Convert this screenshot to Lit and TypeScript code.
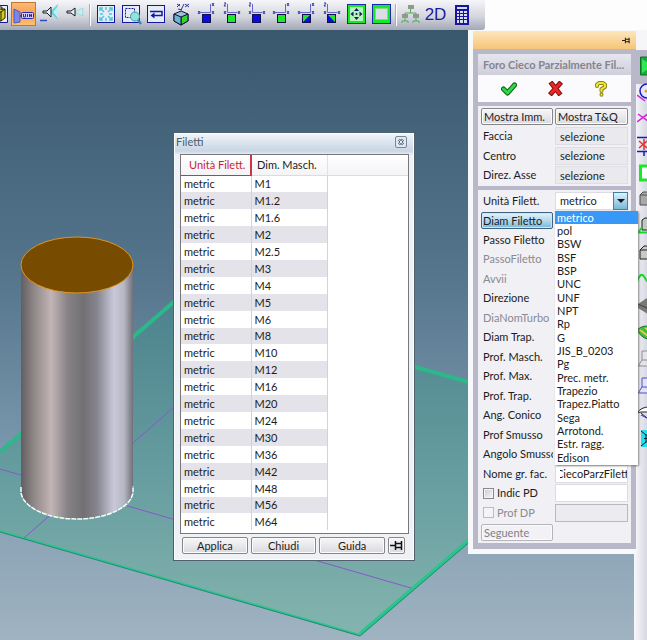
import { LitElement, html, css, svg, nothing } from "lit";
import { customElement, state } from "lit/decorators.js";
import { classMap } from "lit/directives/class-map.js";

const NAVY = "#1616a0";

/* ---------- toolbar icons, drawn on a 25 x 30 field ---------- */

const cube = (x: number, y: number) => svg`
  <path d="M${x} ${y + 3}l7-3 7 3v7l-7 4-7-4z" fill="#9cc0d8" stroke="#101030"/>
  <path d="M${x + 7} ${y + 6}l7-3v7l-7 4z" fill="#2fd42f" stroke="#101030"/>
  <path d="M${x} ${y + 3}l7 3v8l-7-4z" fill="#6cb4d0" stroke="#101030"/>`;

/* axis triad over a small coloured square; flip mirrors the long axis */
const view = (fill: string, flip: boolean, corner?: string) => svg`
  <path d=${flip ? "M16.500 4v8.500M6 12.500h10.500" : "M8.500 4v8.500M8.500 12.500h10"} fill="none" stroke="#6868c8"/>
  <path d=${flip ? "M18 3l2 3m0-3l-2 3M4 11l2 3m0-3l-2 3M18 11l2 3m0-3l-2 3" : "M5 3h2l-2 3h2M5 11l2 3m0-3l-2 3M19 11l2 3m0-3l-2 3"} stroke="#3838b0" fill="none"/>
  <rect x="8.500" y="14.500" width="8" height="8" fill=${fill} stroke="#101050"/>
  ${corner ? svg`<path d=${flip ? "M16 15v7H9z" : "M9 15v7h7z"} fill=${corner}/>` : nothing}`;

const frame = svg`<rect x="3.500" y="5.500" width="17" height="17" fill="#e4ecf8" stroke="${NAVY}"/>`;

const tools: { name: string; art: unknown; cls?: string }[] = [
  { name: "Solido", cls: "cut", art: svg`<path d="M8 5.500h15.500v17H8" fill="#eef" stroke="${NAVY}"/>
      <path d="M10 12l4-3h7v9l-4 3h-7z" fill="#d8cc20" stroke="#202000"/><path d="M10 12h7v9M17 12l4-3M12 7h6v3" fill="none" stroke="#202000"/>` },
  { name: "Quota", cls: "active", art: svg`<path d="M3 9l6 3v10l-6 1z" fill="#7c86e8" stroke="#5058c8"/>
      <path d="M9 16h2" stroke="${NAVY}"/><rect x="10.500" y="12.500" width="12" height="6" rx="1" fill="#d4ccf4" stroke="#2828b0"/>
      <path d="M12.500 14v3h2v-3M16.500 14v3M18.500 17v-3l2 3v-3" fill="none" stroke="#2828b0"/>` },
  { name: "Luce ampia", art: svg`<path d="M14 12l8-8q-2 8 0 16z" fill="#5fd4dc"/><path d="M17 12l5-6v12z" fill="#b8f0f4"/>
      <path d="M7 11h4l4-4v10l-4-4H7z" fill="#e8f4f4" stroke="#101820"/><path d="M4 20.500h7" stroke="#2850c0" stroke-width="1.500"/>` },
  { name: "Luce stretta", art: svg`<path d="M14 12l8-4q-1 4 0 8z" fill="#c4f0f0" stroke="#78c8cc" stroke-width=".5"/>
      <path d="M6 11h4l4-3v8l-4-3H6z" fill="#e8f4f4" stroke="#101820"/>` },
  { name: "", cls: "sep", art: nothing },
  { name: "Zoom tutto", art: svg`${frame}<g stroke="#50c8d8" stroke-width="1.500" fill="none"><path d="M10 12L6 8m0 3V8h3M14 12l4-4m-3 0h3v3M10 16l-4 4m0-3v3h3M14 16l4 4m0-3v3h-3M12 10V7M12 18v3M9 14H6M15 14h3"/></g>` },
  { name: "Zoom finestra", art: svg`${frame}<path d="M6.500 8.500h9v9h-9z" fill="none" stroke="${NAVY}" stroke-dasharray="2 1"/>
      <path d="M19 20l3 4" stroke="#3088b8" stroke-width="2.500"/><circle cx="16" cy="16.500" r="4.500" fill="#8fe4dc" stroke="#4898b0"/>` },
  { name: "Vista precedente", art: svg`${frame}<path d="M6 11.500H18V15.500H9" fill="none" stroke="${NAVY}" stroke-width="1.500"/><path d="M6.500 15.500l4-3v6z" fill="${NAVY}"/>` },
  { name: "Assonometria", art: svg`${cube(5, 11)}<path d="M8 4l3 2m0-2L8 7m7-3l-3 6M16 4l4 3m0-3l-4 3M9 9l4 1" stroke="#3030a8" fill="none"/>` },
  { name: "Vista frontale", art: view("#0c0ce0", true) },
  { name: "Vista dietro", art: view("#20e828", false) },
  { name: "Vista destra", art: view("#0c0ce0", false) },
  { name: "Vista sinistra", art: view("#20e828", true) },
  { name: "Vista alto", art: view("#20e828", true, "#0c0ce0") },
  { name: "Vista basso", art: view("#20e828", false, "#0c0ce0") },
  { name: "Centra", art: svg`<rect x="3.500" y="4.500" width="18" height="19" fill="#18e828" stroke="#1828b0"/><rect x="6" y="7" width="13" height="14" fill="#b8f4c0"/>
      <path d="M12.500 8l2.500 3h-5zM12.500 20l2.500-3h-5zM6.500 14l3-2.500v5zM18.500 14l-3-2.500v5z" fill="#102050"/><circle cx="12.500" cy="14" r="1" fill="#102050"/>` },
  { name: "Riquadro", art: svg`<rect x="3.500" y="4.500" width="18" height="19" fill="#18e828" stroke="#1828b0"/><rect x="6.500" y="8.500" width="12" height="11" fill="#dcdce8" stroke="#80d890"/>` },
  { name: "", cls: "sep short", art: nothing },
  { name: "Struttura", art: svg`<path d="M12.500 9v4M7 16v-3h11v3M7 18v3M4 23v-2h6v2M18 18v3M15 23v-2h6v2" fill="none" stroke="#50b050"/>
      <path d="M10 5h6v4h-6zM4 14h6v4H4zM15 14h6v4h-6z" fill="#909890"/>` },
  { name: "2D", cls: "word", art: nothing },
  { name: "Calcolatrice", art: svg`<rect x="7" y="5" width="14" height="20" fill="${NAVY}"/><rect x="9" y="7" width="10" height="2" fill="#d8dcf4"/>
      <path d="M9 11h2v2H9zM12 11h3v2h-3zM16 11h3v2h-3zM9 14h2v2H9zM12 14h3v2h-3zM16 14h3v2h-3zM9 17h2v2H9zM12 17h3v2h-3zM16 17h3v2h-3zM9 20h2v3H9zM12 20h3v3h-3zM16 20h3v3h-3z" fill="#d8dcf4"/>` },
];

/* ---------- side rail icons, 20 x 20, cut off by the window edge ---------- */
const rail: { name: string; art: unknown }[] = [
  { name: "Avvia", art: svg`<path d="M3.500 1h16v18h-16z" fill="#18a838" stroke="#107028"/><path d="M5 3l12 7-12 7z" fill="#30e850"/>` },
  { name: "Cerchio", art: svg`<circle cx="10" cy="8" r="7" fill="#e8e8ff" stroke="#1818d0" stroke-width="1.500"/><circle cx="9" cy="8" r="1.500" fill="#e0a020"/><path d="M0 12l8 6" stroke="#d020d0" stroke-width="1.500"/>` },
  { name: "Linee", art: svg`<path d="M0 13L12 4M1 5l10 7" stroke="#d820d8" stroke-width="1.500" fill="none"/>` },
  { name: "Punto", art: svg`<path d="M0 1.500h20M0 15.500h20M7 16v8" stroke="#1818c0" stroke-width="1.500"/><path d="M2 5l8 7M2 12l8-7M7 3v11" stroke="#e83030" stroke-width="1.500"/>` },
  { name: "Rettangolo", art: svg`<rect x="3.500" y="3" width="16" height="14" fill="#fff" stroke="#18e828" stroke-width="3"/>` },
  { name: "Blocco", art: svg`<path d="M3 6l3-3h14v13H3z" fill="#a8a8a8" stroke="#505050"/><path d="M3 6h16" stroke="#505050"/>` },
  { name: "Estrusione", art: svg`<path d="M5 4l3-2h12v12H5z" fill="#c0c8c0" stroke="#202020"/><path d="M1 16.500l4-5M1 16.500h19" stroke="#18d828" stroke-width="2"/>` },
  { name: "Scatola", art: svg`<path d="M3 7l4-4h13v13H3z" fill="#c8c8c8" stroke="#202020"/><path d="M3 7h16" stroke="#202020"/>` },
  { name: "Curva", art: svg`<path d="M0 13q4-12 8-4t8 0" fill="none" stroke="#18d828" stroke-width="2"/>` },
  { name: "Piastra", art: svg`<path d="M1 8l9-6 9 4v9l-8 3-10-6z" fill="#787878"/><path d="M1 8l9 4 9-5" stroke="#404040" fill="none"/>` },
  { name: "Superficie", art: svg`<path d="M0 7q6-6 16-3v12q-10 2-16-9z" fill="#38c048" stroke="#207028"/><path d="M3 7l8 6M8 5l7 4" stroke="#e0d040" stroke-width="2"/>` },
  { name: "Lamiera", art: svg`<path d="M5 2h12v9H5zM5 11l-4 6h14" fill="#e4e4e8" stroke="#909090"/>` },
  { name: "Piega", art: svg`<path d="M5 2h12v9H5zM5 11l-4 6h14" fill="#e0e0f8" stroke="#5050c0"/>` },
  { name: "Volume", art: svg`<path d="M0 10q4-6 12-6h8v5H4zM4 10l6 5" fill="#fff" stroke="#202030"/><path d="M4 12l8 4" stroke="#3030b0"/>` },
  { name: "Griglia", art: svg`<path d="M4 1h16v17H4z" fill="#20e0e8"/><path d="M4 2l5 4v7l-5 4M9 6h11M9 13h11M7 9.500h13M12 6v7" fill="none" stroke="#102030"/>` },
];

const pin = svg`<path d="M0 5.500h5M5.500 1v9M6 3.500h6M6 7.500h6M11.500 1v9" fill="none" stroke="#111" stroke-width="1.500"/>`;

type Row = { label: string; id: string; off?: boolean; button?: boolean };
const params: Row[] = [
  { label: "Diam Filetto", id: "diam", button: true },
  { label: "Passo Filetto", id: "passo" },
  { label: "PassoFiletto", id: "passo2", off: true },
  { label: "Avvii", id: "avvii", off: true },
  { label: "Direzione", id: "dir" },
  { label: "DiaNomTurbo", id: "turbo", off: true },
  { label: "Diam Trap.", id: "dtrap" },
  { label: "Prof. Masch.", id: "pmasch" },
  { label: "Prof. Max.", id: "pmax" },
  { label: "Prof. Trap.", id: "ptrap" },
  { label: "Ang. Conico", id: "conico" },
  { label: "Prof Smusso", id: "smusso" },
  { label: "Angolo Smusso", id: "asmusso" },
];
const units = ["metrico", "pol", "BSW", "BSF", "BSP", "UNC", "UNF", "NPT", "Rp", "G", "JIS_B_0203", "Pg",
  "Prec. metr.", "Trapezio", "Trapez.Piatto", "Sega", "Arrotond.", "Estr. ragg.", "Edison"];
const threads = ["M1", "M1.2", "M1.6", "M2", "M2.5", "M3", "M4", "M5", "M6", "M8", "M10", "M12", "M16", "M20",
  "M24", "M30", "M36", "M42", "M48", "M56", "M64"];

const base = css`
  * { box-sizing: border-box; }
  button, input, select { font: inherit; color: inherit; margin: 0; padding: 0; border-radius: 0; }
  button { border: 0; background: none; }
  svg { display: block; }
  .btn {
    border: 1px solid #85858a; border-radius: 2px;
    background: linear-gradient(#f6f6f8, #e9e9ec 50%, #d9d9de);
    box-shadow: inset 0 0 0 1px #fbfbfc;
  }
`;

@customElement("thread-dialog")
export class ThreadDialog extends LitElement {
  static styles = [base, css`
    :host {
      display: block; border: 1px solid #50606c; padding: 0 5px 6px 6px;
      background: linear-gradient(#f0f5fa, #c9d6e4 18px, #f0f1f5 22px);
      box-shadow: inset 0 0 0 1px #fafcfe;
    }
    header { display: flex; align-items: center; justify-content: space-between; height: 18px; color: #4c5d6c; }
    h2 { margin: 0 0 0 -4px; font-size: 11px; line-height: 16px; font-weight: 400; }
    .close { width: 12px; height: 12px; margin-right: 2px; border: 1px solid #748898; border-radius: 2px; background: #dfe8f0; }
    .list { margin-top: 3px; height: 380px; border: 1px solid #77777c; background: #fff; }
    .head { background: linear-gradient(#fff, #f4f4f6); }
    table { border-collapse: collapse; table-layout: fixed; width: 100%; line-height: 14px; }
    .unit { width: 70px; }
    .dim { width: 76px; }
    th { height: 20px; padding: 0 0 0 5px; font-weight: 400; text-align: left; border-right: 1px solid #e2e2e6; border-bottom: 1px solid #dcdce0; }
    th:first-child { padding-left: 8px; color: #cc1c34; border-right: 2px solid #cc3448; border-bottom-color: #cc3448; }
    th:last-child { border-right: 0; }
    td { height: 17px; padding: 0 3px; border-right: 1px solid #d2d2d8; }
    td:last-child { border: 0; }
    tr:nth-child(10n) td { height: 16px; }
    tr:nth-child(even) td:not(:last-child) { background: #e4e3e9; }
    .actions { display: flex; gap: 3px; margin: 3px 4px 0 2px; height: 17px; }
    .actions .btn { flex: 1; line-height: 14px; }
    .actions .pin { flex: 0 0 17px; display: grid; place-items: center; }
  `];
  render() {
    return html`
      <header><h2>Filetti</h2>
        <button class="close" aria-label="Chiudi finestra"><svg width="10" height="10" viewBox="0 0 10 10"><path d="M3 2.500l4 5M7 2.500l-4 5" stroke="#405464" stroke-width="2.500"/><path d="M3 2.500l4 5M7 2.500l-4 5" stroke="#fff"/></svg></button>
      </header>
      <div class="list"><table>
        <colgroup><col class="unit"><col class="dim"><col></colgroup>
        <thead class="head"><tr><th>Unità Filett.</th><th>Dim. Masch.</th><th></th></tr></thead>
        <tbody>${threads.map((t) => html`<tr><td>metric</td><td>${t}</td><td></td></tr>`)}</tbody>
      </table></div>
      <div class="actions">
        <button class="btn">Applica</button><button class="btn">Chiudi</button><button class="btn">Guida</button>
        <button class="btn pin" aria-label="Fissa"><svg width="13" height="11" viewBox="0 0 13 11">${pin}</svg></button>
      </div>`;
  }
}

@customElement("hole-panel")
export class HolePanel extends LitElement {
  @state() private unit = "metrico";
  static styles = [base, css`
    :host { display: block; background: #f7f8fa; padding: 1px 0 5px 5px; }
    .grip { display: flex; align-items: center; justify-content: flex-end; height: 18px; padding-right: 6px; background: linear-gradient(#fde6bd, #f6c577); }
    .inner { display: flex; flex-direction: column; gap: 4px; padding: 5px 5px 6px; background: #b9b8cb; }
    section { background: #f0f0f5; padding: 1px 3px; }
    .title { padding: 0; background: #fbfbfd; }
    h1 { margin: 0; padding: 0 5px; height: 21px; font-size: 11px; line-height: 21px; color: #85858f; background: linear-gradient(#e6e6ef, #cfcfdb); white-space: nowrap; }
    .confirm { display: flex; justify-content: space-around; align-items: center; height: 27px; padding: 0 8px; }
    .row { display: grid; grid-template-columns: 72px 1fr; column-gap: 2px; align-items: center; height: 19px; line-height: 16px; }
    .row:nth-of-type(even) { height: 20px; }
    .row > label { padding-left: 2px; overflow: hidden; white-space: nowrap; }
    .off { color: #8a8a90; }
    .btn { height: 17px; line-height: 15px; padding: 0 2px; text-align: left; white-space: nowrap; }
    .hot { border-color: #3c6480; background: linear-gradient(#e4f2fa, #b4daee 50%, #78b8d8); box-shadow: inset 0 0 0 1px #c8e8f8; padding: 0 1px; }
    .ghost { border-color: #b4b4ba; background: #f2f2f6; color: #808086; }
    .field { width: 100%; min-width: 0; height: 18px; padding: 0 4px; border: 1px solid #dcdce2; background: #fff; }
    .pick { background: #e9e9ee; border-color: #dedee4; }
    .field:disabled { background: #ececf0; border-color: #b8b8be; }
    .name { text-indent: -4px; padding-right: 0; }
    .combo { position: relative; }
    select { display: block; appearance: none; width: 100%; height: 18px; padding: 0 18px 0 4px; border: 1px solid #dcdce2; background: #fff; outline: none; }
    .arrow { position: absolute; right: 0; top: 0; width: 15px; height: 18px; display: grid; place-items: center; border: 1px solid #4080a0; background: linear-gradient(#e0f2fa, #a8d4ea 50%, #78b8d8); pointer-events: none; }
    ul { position: absolute; z-index: 2; top: 100%; left: 0; right: -10px; margin: 1px 0 0; padding: 0 0 1px; list-style: none; background: #fff; box-shadow: 1px 1px 2px #555a; }
    li { height: 13px; line-height: 13px; padding-left: 2px; white-space: nowrap; }
    li:nth-child(3n) { height: 14px; }
    li.sel { background: #3898f8; color: #fff; }
    .check { display: flex; align-items: center; gap: 3px; }
    input[type="checkbox"] { appearance: none; flex: none; width: 11px; height: 11px; border: 1px solid #88888e; background: linear-gradient(135deg, #c8ccd0, #f6f6f8); box-shadow: inset 0 0 0 1px #f4f4f6; }
    input[type="checkbox"]:disabled { border-color: #bcbcc2; background: #f4f4f7; }
  `];
  render() {
    return html`
      <div class="grip"><button aria-label="Fissa pannello"><svg width="8" height="7" viewBox="0 0 13 11">${pin}</svg></button></div>
      <div class="inner">
        <section class="title">
          <h1>Foro Cieco Parzialmente Fil...</h1>
          <div class="confirm">
            <button aria-label="Conferma"><svg width="16" height="15" viewBox="0 0 16 15"><path d="M2.500 8l4 4L13.500 4" fill="none" stroke="#106018" stroke-width="5" stroke-linecap="round" stroke-linejoin="round"/><path d="M2.500 8l4 4L13.500 4" fill="none" stroke="#30d848" stroke-width="3" stroke-linecap="round" stroke-linejoin="round"/></svg></button>
            <button aria-label="Annulla"><svg width="15" height="15" viewBox="0 0 15 15"><path d="M4 3l7 9M11.500 3l-8 9" fill="none" stroke="#801010" stroke-width="5" stroke-linecap="square"/><path d="M4 3l7 9M11.500 3l-8 9" fill="none" stroke="#e82828" stroke-width="3" stroke-linecap="square"/></svg></button>
            <button aria-label="Aiuto"><svg width="14" height="16" viewBox="0 0 14 16"><g fill="none" stroke-linecap="round" stroke-linejoin="round"><path d="M3 5V3.500L5 2h4l2 1.500V6L7.500 8v2M7.500 13.500v.2" stroke="#8c8410" stroke-width="4"/><path d="M3 5V3.500L5 2h4l2 1.500V6L7.500 8v2M7.500 13.500v.2" stroke="#f0e830" stroke-width="2"/></g></svg></button>
          </div>
        </section>
        <section>
          <div class="row"><button class="btn">Mostra Imm.</button><button class="btn">Mostra T&amp;Q</button></div>
          ${["Faccia", "Centro", "Direz. Asse"].map((l, i) => html`
            <div class="row"><label for="pick${i}">${l}</label><input class="field pick" id="pick${i}" readonly value="selezione"></div>`)}
        </section>
        <section>
          <div class="row"><label for="unit">Unità Filett.</label>
            <div class="combo">
              <select id="unit" .value=${this.unit} @change=${(e: Event) => (this.unit = (e.target as HTMLSelectElement).value)}>
                ${units.map((u) => html`<option ?selected=${u === this.unit}>${u}</option>`)}
              </select>
              <span class="arrow"><svg width="8" height="4" viewBox="0 0 8 4"><path d="M0 0h8L4 4z" fill="#101820"/></svg></span>
              <ul role="listbox" aria-label="Unità">
                ${units.map((u) => html`<li role="option" class=${classMap({ sel: u === this.unit })} aria-selected=${u === this.unit} @click=${() => (this.unit = u)}>${u}</li>`)}
              </ul>
            </div>
          </div>
          ${params.map((p) => html`<div class="row">
            ${p.button ? html`<button class="btn hot">${p.label}</button>` : html`<label for=${p.id} class=${classMap({ off: !!p.off })}>${p.label}</label>`}
            <input class="field" id=${p.id} aria-label=${p.label} ?disabled=${p.off}></div>`)}
          <div class="row"><label for="nome">Nome gr. fac.</label><input class="field name" id="nome" value="CiecoParzFilett"></div>
          <div class="row"><label class="check"><input type="checkbox">Indic PD</label><input class="field" aria-label="Indic PD"></div>
          <div class="row"><label class="check off"><input type="checkbox" disabled>Prof DP</label><input class="field" aria-label="Prof DP" disabled></div>
          <div class="row"><button class="btn ghost" disabled>Seguente</button></div>
        </section>
      </div>`;
  }
}

@customElement("app-root")
export class AppRoot extends LitElement {
  static styles = [base, css`
    :host { display: flex; flex-direction: column; min-height: 100vh; overflow: hidden; background: #fdfdfe; color: #1c1c22; font: 11px Lato, "Open Sans", sans-serif; }
    .toolbar { display: flex; align-self: flex-start; height: 30px; padding-right: 12px; border-radius: 0 0 3px 0; background: linear-gradient(#f6f6f9, #d4d6de 55%, #a4a8b6); }
    .tool { width: 25px; height: 30px; flex: none; overflow: hidden; }
    .cut { width: 11px; display: flex; justify-content: flex-end; }
    .cut svg { flex: none; margin-right: 2px; }
    .active { height: 24px; margin-top: 2px; border: 1px solid #c07830; background: linear-gradient(#fbb878, #f8a050 50%, #fcc070); }
    .active svg { margin: -3px 0 0 -1px; }
    .sep { width: 8px; }
    .short { width: 4px; }
    .rule { display: block; width: 2px; height: 22px; margin: 4px auto 0; border-left: 1px solid #a8acb8; border-right: 1px solid #fff; }
    .word { font: 17px/28px "Liberation Sans", sans-serif; color: #1c1c9c; }
    .work { flex: 1; display: flex; align-items: stretch; }
    .stage { position: relative; flex: 1; min-width: 0; display: flex; justify-content: flex-end; align-items: flex-start; background: linear-gradient(#39586e, #54758c 40%, #7e9bb0 72%, #a0b3c1); }
    .scene { position: absolute; inset: 0; width: 100%; height: 100%; }
    hole-panel { position: relative; z-index: 1; width: 168px; margin-right: -2px; }
    thread-dialog { position: absolute; left: 173px; top: 102px; width: 242px; }
    .rail { width: 13px; padding-top: 22px; overflow: hidden; background: linear-gradient(#f6f6f9 20px, #b9b8cb 20px 54px, transparent 54px), linear-gradient(90deg, #f8f8fb, #d8d8e4); }
    .rail button { display: block; width: 20px; height: 27px; margin-left: 3px; }
    .rail button:nth-child(3n) { height: 26px; }
  `];
  render() {
    return html`
      <nav class="toolbar">
        ${tools.map((t) => t.name === ""
          ? html`<span class=${t.cls ?? ""}><i class="rule"></i></span>`
          : html`<button class="tool ${t.cls ?? ""}" aria-label=${t.name}>${t.cls === "word" ? t.name : html`<svg width="25" height="30" viewBox="0 0 25 30">${t.art}</svg>`}</button>`)}
      </nav>
      <div class="work">
        <main class="stage">
          <svg class="scene" viewBox="0 30 634 610" preserveAspectRatio="xMinYMin slice" aria-hidden="true">
            <defs>
              <linearGradient id="plane" x1="0" y1="0" x2="0" y2="1"><stop offset="0" stop-color="#4c828c"/><stop offset=".5" stop-color="#659c9f"/><stop offset="1" stop-color="#84b4ae"/></linearGradient>
              <linearGradient id="metal"><stop offset="0" stop-color="#625e60"/><stop offset=".1" stop-color="#8a8283"/><stop offset=".27" stop-color="#c2b5b5"/><stop offset=".42" stop-color="#858184"/><stop offset=".56" stop-color="#727074"/><stop offset=".68" stop-color="#86868f"/><stop offset=".83" stop-color="#c8c8da"/><stop offset=".92" stop-color="#b6b7c3"/><stop offset="1" stop-color="#707078"/></linearGradient>
            </defs>
            <path d="M-130 562L176 299 608 421 360 635 0 531z" fill="url(#plane)"/>
            <path d="M0 452L176 300 608 421" fill="none" stroke="#2cb888" stroke-width="4"/>
            <path d="M0 531L360 635" fill="none" stroke="#2cc48c" stroke-width="2"/>
            <path d="M608 421L360 634" fill="none" stroke="#2cc48c" stroke-width="4"/>
            <path d="M0 532L360 636 608 423" fill="none" stroke="#248878"/>
            <path d="M0 469L411 588M24 538L173 408" fill="none" stroke="#8858c8"/>
            <path d="M21 265V491A56 28 0 0 0 133 491V265z" fill="url(#metal)"/>
            <path d="M21 487v4A56 28 0 0 0 133 491v-5" fill="none" stroke="#f4fff8" stroke-width="1.500" stroke-dasharray="5 1"/>
            <ellipse cx="77" cy="265" rx="56" ry="28" fill="#774b00" stroke="#e09420"/>
          </svg>
          <thread-dialog></thread-dialog>
          <hole-panel></hole-panel>
        </main>
        <nav class="rail">${rail.map((r) => html`<button aria-label=${r.name}><svg width="20" height="20" viewBox="0 0 20 20">${r.art}</svg></button>`)}</nav>
      </div>`;
  }
}
